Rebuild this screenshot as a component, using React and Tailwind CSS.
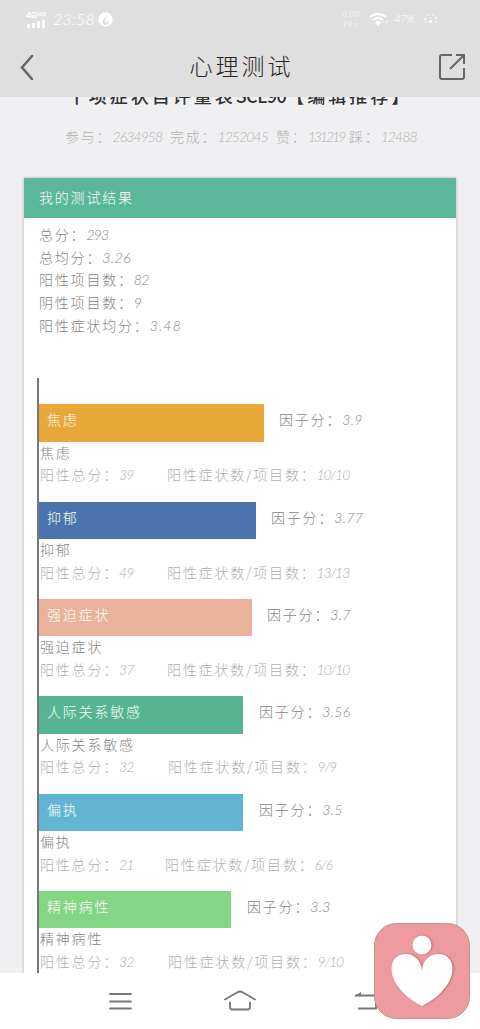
import React from 'react';

const factors = [
  { name: '焦虑', color: 'bg-[#e8a838]', width: 'w-[225px]', gap: 'ml-[15px]', score: '3.9', total: '39', count: '10/10', space: 'w-[127px]' },
  { name: '抑郁', color: 'bg-[#4a74ab]', width: 'w-[217px]', gap: 'ml-[15px]', score: '3.77', total: '49', count: '13/13', space: 'w-[127px]' },
  { name: '强迫症状', color: 'bg-[#eab29a]', width: 'w-[213px]', gap: 'ml-[15px]', score: '3.7', total: '37', count: '10/10', space: 'w-[127px]' },
  { name: '人际关系敏感', color: 'bg-[#57b492]', width: 'w-[204px]', gap: 'ml-[16px]', score: '3.56', total: '32', count: '9/9', space: 'w-[128px]' },
  { name: '偏执', color: 'bg-[#61b5d2]', width: 'w-[204px]', gap: 'ml-[16px]', score: '3.5', total: '21', count: '6/6', space: 'w-[125px]' },
  { name: '精神病性', color: 'bg-[#84d584]', width: 'w-[192px]', gap: 'ml-[16px]', score: '3.3', total: '32', count: '9/10', space: 'w-[128px]' },
];

const summary = [
  { label: '总分', value: '293', tracking: 'tracking-[-0.8px]' },
  { label: '总均分', value: '3.26', tracking: 'tracking-[0.5px]' },
  { label: '阳性项目数', value: '82', tracking: 'tracking-[-0.8px]' },
  { label: '阴性项目数', value: '9', tracking: 'tracking-[0px]' },
  { label: '阳性症状均分', value: '3.48', tracking: 'tracking-[1.2px]' },
];

const stats = [
  { label: '参与', value: '2634958', width: 'w-[105px]', tracking: 'tracking-[-0.9px]' },
  { label: '完成', value: '1252045', width: 'w-[106px]', tracking: 'tracking-[-0.9px]' },
  { label: '赞', value: '131219', width: 'w-[73px]', tracking: 'tracking-[-2px]' },
  { label: '踩', value: '12488', width: 'w-[70px]', tracking: 'tracking-[-0.9px]' },
];

function Num({ children, tracking = 'tracking-[0px]' }) {
  return <span className={`font-['Lato'] text-[14px] leading-none font-light italic ${tracking}`}>{children}</span>;
}

function StatusBar() {
  return (
    <div className="flex h-[37px] items-center pt-[1px] pl-[26px] text-white">
      <div className="w-[22px]">
        <div className="flex font-['Liberation_Sans'] text-[8.5px] leading-[8px] font-bold tracking-[0px]">
          4G<span className="text-[6px] leading-[6px]">HD</span>
        </div>
        <div className="flex h-[9px] items-end gap-[2px] pl-[1px]">
          <i className="h-[4px] w-[3px] bg-white" />
          <i className="h-[5px] w-[3px] bg-white" />
          <i className="h-[7px] w-[3px] bg-white" />
          <i className="h-[8px] w-[3px] bg-white" />
        </div>
      </div>
      <span className="ml-[5px] w-[45px] font-['Lato'] text-[16px] font-light tracking-[0.2px] whitespace-nowrap italic">23:58</span>
      <svg className="h-[15px] w-[15px]" viewBox="0 0 15 15">
        <circle cx="7.5" cy="7.5" r="7.2" fill="white" />
        <path d="M6.500 1.500Q10 4 6.500 6.500T6 12.500Q8 14 10 12Q12 9.500 9.500 7.500Q10 10 8 10.500Q6 9 8 6.500Q10 4 6.500 1.500Z" fill="#dfdfdf" />
      </svg>
      <div className="ml-[227px] w-[22px] text-center font-['Lato'] text-[7px] leading-[10px] tracking-[0.4px] italic">
        <div className="text-[8px]">0.00</div>
        <div>KB/s</div>
      </div>
      <svg className="ml-[7px] h-[15px] w-[19px]" viewBox="0 0 19 15" fill="none" stroke="white" strokeWidth="2">
        <path d="M1 5 Q9 -1 17 5M4 8 Q9 4 14 8M6.500 11 Q9 9 11.500 11" />
        <path d="M6.500 11h5L9 14z" fill="white" stroke="none" />
        <circle cx="17.500" cy="10" r="1" fill="white" stroke="none" />
      </svg>
      <span className="ml-[6px] w-[22px] font-['Lato'] text-[12px] font-light tracking-[-0.9px] italic">47%</span>
      <svg className="ml-[7px] h-[12px] w-[15px]" viewBox="0 0 15 12" fill="white">
        <circle cx="5" cy="2" r="0.800" /><circle cx="10" cy="2" r="0.800" />
        <circle cx="2" cy="6" r="0.900" /><circle cx="7.500" cy="5" r="0.700" /><circle cx="13" cy="5" r="0.900" />
        <circle cx="3" cy="9" r="0.700" /><circle cx="7.500" cy="8.500" r="1.500" /><circle cx="12.500" cy="9" r="0.800" />
      </svg>
    </div>
  );
}

function Factor({ item }) {
  return (
    <div className="h-[97.3px]">
      <div className="flex h-[37.3px]">
        <div className={`${item.color} ${item.width} pl-[8px] leading-[31px] text-white`}>{item.name}</div>
        <div className={`${item.gap} leading-[31px] text-[#858585]`}>因子分：<Num tracking="tracking-[0.4px]">{item.score}</Num></div>
      </div>
      <div className="h-[22.6px] pl-[1px] leading-[20.600px] text-[#858585]">{item.name}</div>
      <div className="flex h-[22.6px] pl-[1px] leading-[20.600px] text-[#afafaf]">
        <span className={item.space}>阳性总分：<Num tracking="tracking-[-0.8px]">{item.total}</Num></span>
        <span>阳性症状数/项目数：<Num tracking="tracking-[-1.1px]">{item.count}</Num></span>
      </div>
    </div>
  );
}

export default function App() {
  return (
    <div className="relative flex h-[1029px] w-[480px] flex-col overflow-hidden bg-[#f0f0f2] font-['Noto_Sans_CJK_SC',sans-serif] text-[14px] font-light tracking-[1.8px] whitespace-nowrap">
      <header className="z-10 h-[97px] shrink-0 bg-[#dfdfdf]">
        <StatusBar />
        <div className="flex h-[60px] items-center justify-between pr-[14px] pl-[19px]">
          <svg className="h-[28px] w-[16px]" viewBox="0 0 16 28" fill="none" stroke="#666" strokeWidth="2.500" strokeLinecap="round">
            <path d="M13 3 3 14.500 13 26" />
          </svg>
          <h1 className="ml-[10px] pb-[4px] text-[23px] tracking-[3px] text-[#262626]">心理测试</h1>
          <svg className="h-[28px] w-[28px]" viewBox="0 0 28 28" fill="none" stroke="#666" strokeWidth="2">
            <path d="M14 2H4Q2 2 2 4V24Q2 26 4 26H24Q26 26 26 24V15M18 2H26V11M26 2 12 16" />
          </svg>
        </div>
      </header>
      <main className="flex min-h-0 flex-1 flex-col overflow-hidden">
        <h2 className="-mt-[14px] h-[25px] shrink-0 text-center text-[18px] leading-[25px] font-medium tracking-[3px] text-[#333]">
          十项症状自评量表<span className="tracking-[-0.5px]">SCL90</span>【编辑推荐】
        </h2>
        <div className="flex h-[58px] shrink-0 pl-[65px] leading-[56px] text-[#b2b2b2]">
          {stats.map((s) => (
            <span key={s.label} className={s.width}>{s.label}：<Num tracking={s.tracking}>{s.value}</Num></span>
          ))}
        </div>
        <section className="mx-[24px] mt-[12px] flex-1 bg-white shadow-[0_0_3px_rgba(0,0,0,0.25)]">
          <div className="h-[40px] bg-[#5ab799] pl-[15px] leading-[39px] text-white">我的测试结果</div>
          <div className="pt-[5px] pl-[15px] text-[#858585]">
            {summary.map((row) => (
              <div key={row.label} className="h-[22.7px] leading-[22.7px]">{row.label}：<Num tracking={row.tracking}>{row.value}</Num></div>
            ))}
          </div>
          <div className="mt-[41.500px] ml-[13px] border-l-2 border-[#777] pt-[26.500px]">
            {factors.map((item) => <Factor key={item.name} item={item} />)}
          </div>
        </section>
      </main>
      <nav className="flex h-[56px] shrink-0 items-center bg-white pl-[108px]">
        <svg className="h-[24px] w-[24px]" viewBox="0 0 24 24" stroke="#777" strokeWidth="1.800" strokeLinecap="round"><path d="M2 5H23M2 12.500H23M2 19.500H23" /></svg>
        <svg className="ml-[91px] h-[24px] w-[34px]" viewBox="0 0 34 24" fill="none" stroke="#777" strokeWidth="1.800" strokeLinecap="round">
          <path d="M2 10.500 14 3.500Q17 1.500 20 3.500L32 10.500M7 13.500V18Q7 20.500 9.500 20.500H24.500Q27 20.500 27 18V13.500" />
        </svg>
        <svg className="ml-[96px] h-[24px] w-[26px]" viewBox="0 0 26 24" fill="none" stroke="#777" strokeWidth="1.800">
          <path d="M2 6.500H23V19.500H5" /><path d="M1 7.200 8 3V7.200z" fill="#777" stroke="none" />
        </svg>
      </nav>
      <svg className="absolute top-[922px] left-[373px] z-20 h-[98px] w-[98px]" viewBox="0 0 98 98">
        <rect x="1.500" y="1.500" width="95" height="95" rx="22" fill="#ed9b9f" stroke="#c98e91" />
        <g fill="white" className="drop-shadow-[1px_0_1px_rgba(120,50,50,0.5)]">
          <circle cx="49" cy="23" r="9.500" />
          <path d="M49 49C48.500 38 41 32 32.500 32C24 32 18.500 38 18.500 46.500C18.500 62 33 76 49 84C65 76 79.500 62 79.500 46.500C79.500 38 74 32 65.500 32C57 32 49.500 38 49 49Z" />
        </g>
      </svg>
    </div>
  );
}
